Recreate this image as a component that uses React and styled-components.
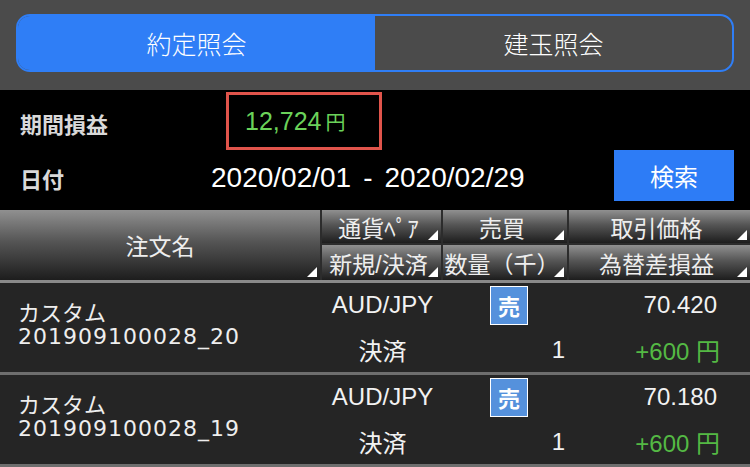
import styled, { createGlobalStyle } from "styled-components";

const GlobalStyle = createGlobalStyle`
  body {
    margin: 0;
    background: #000;
    font-family: "Liberation Sans", "Noto Sans CJK JP", sans-serif;
    color: #fff;
  }
`;

const rows = [
  { name: "201909100028_20", price: "70.420", qty: "1", pl: "+600" },
  { name: "201909100028_19", price: "70.180", qty: "1", pl: "+600" },
];

function App() {
  return (
    <Screen>
      <GlobalStyle />
      <TopBar>
        <Segmented>
          <Tab $active>約定照会</Tab>
          <Tab>建玉照会</Tab>
        </Segmented>
      </TopBar>

      <Summary>
        <SummaryRow>
          <Label $shift="6px">期間損益</Label>
          <ProfitBox>
            12,724<Yen>円</Yen>
          </ProfitBox>
        </SummaryRow>
        <SummaryRow $bottom="4px">
          <Label>日付</Label>
          <DateRange>
            2020/02/01<Dash>-</Dash>2020/02/29
          </DateRange>
          <SearchButton>検索</SearchButton>
        </SummaryRow>
      </Summary>

      <HeadGrid>
        <HeadCell $span>注文名</HeadCell>
        <HeadCell>通貨ﾍﾟｱ</HeadCell>
        <HeadCell>売買</HeadCell>
        <HeadCell>取引価格</HeadCell>
        <HeadCell>新規/決済</HeadCell>
        <HeadCell>数量（千）</HeadCell>
        <HeadCell>為替差損益</HeadCell>
      </HeadGrid>

      {rows.map((r) => (
        <Row key={r.name}>
          <NameCell>
            <span>カスタム</span>
            <OrderId>{r.name}</OrderId>
          </NameCell>
          <Cell $align="center">AUD/JPY</Cell>
          <Cell $align="center">
            <SideBadge>売</SideBadge>
          </Cell>
          <Cell $align="flex-end" $pad="33px">
            {r.price}
          </Cell>
          <Cell $align="center">決済</Cell>
          <Cell $align="flex-end" $pad="4px">
            {r.qty}
          </Cell>
          <Cell $align="flex-end" $pad="30px">
            <Gain>
              {r.pl} <small>円</small>
            </Gain>
          </Cell>
        </Row>
      ))}
    </Screen>
  );
}

export default App;

const Screen = styled.div`
  width: 750px;
  height: 467px;
  overflow: hidden;
  background: #000;
`;

const TopBar = styled.div`
  background: #4b4b4b;
  height: 90px;
  box-sizing: border-box;
  padding: 14px 16px 0;
`;

const Segmented = styled.div`
  display: flex;
  height: 58px;
  box-sizing: border-box;
  border: 2px solid #2f7ef6;
  border-radius: 14px;
  overflow: hidden;
`;

const Tab = styled.div`
  flex: 1;
  display: flex;
  align-items: center;
  justify-content: center;
  font-size: 25px;
  font-weight: 300;
  color: #fff;
  background: ${(p) => (p.$active ? "#2f7ef6" : "transparent")};
`;

const Summary = styled.div`
  height: 120px;
  display: flex;
  flex-direction: column;
`;

const SummaryRow = styled.div`
  flex: 1;
  display: flex;
  align-items: center;
  padding-bottom: ${(p) => p.$bottom || "0"};
`;

const Label = styled.div`
  width: 206px;
  padding-left: 20px;
  margin-top: ${(p) => p.$shift || "0"};
  font-size: 22px;
  font-weight: bold;
  color: #d9d9d9;
`;

const ProfitBox = styled.div`
  width: 156px;
  height: 58px;
  margin-top: 2px;
  box-sizing: border-box;
  border: 3px solid #e0544b;
  display: flex;
  align-items: center;
  padding-left: 16px;
  font-size: 25px;
  color: #6bd25a;
`;

const Yen = styled.span`
  font-size: 20px;
  margin-left: 4px;
`;

const DateRange = styled.div`
  width: 403px;
  margin-left: -15px;
  font-size: 28px;
  color: #fff;
  white-space: nowrap;
`;

const Dash = styled.span`
  margin: 0 12px;
`;

const SearchButton = styled.div`
  width: 120px;
  height: 51px;
  margin-top: -5px;
  background: #2d7cf6;
  display: flex;
  align-items: center;
  justify-content: center;
  font-size: 24px;
  color: #fff;
`;

const HeadGrid = styled.div`
  display: grid;
  grid-template-columns: 320px 119px 124px 1fr;
  grid-template-rows: 33px 35px;
  gap: 2px;
  background: #2c2c2c;
  border-bottom: 3px solid #8a8a8a;
`;

const HeadCell = styled.div`
  position: relative;
  grid-row: ${(p) => (p.$span ? "span 2" : "auto")};
  display: flex;
  align-items: center;
  justify-content: center;
  padding-right: ${(p) => (p.$span ? "0" : "6px")};
  font-size: 23px;
  color: #eee;
  white-space: nowrap;
  background: linear-gradient(#909090, #555 45%, #1d1d1d);

  &::after {
    content: "";
    position: absolute;
    right: 3px;
    bottom: 3px;
    border-left: 10px solid transparent;
    border-bottom: 10px solid #fff;
  }
`;

const Row = styled.div`
  display: grid;
  grid-template-columns: 322px 121px 126px 1fr;
  grid-template-rows: 44px 45px;
  background: #252525;
  border-bottom: 3px solid #6e6e6e;
`;

const NameCell = styled.div`
  grid-row: span 2;
  display: flex;
  flex-direction: column;
  justify-content: center;
  padding: 0 0 6px 18px;
  font-size: 22px;
  line-height: 23px;
  color: #eee;
`;

const OrderId = styled.span`
  font-family: "DejaVu Sans", "Noto Sans CJK JP", sans-serif;
  letter-spacing: 1px;
`;

const Cell = styled.div`
  display: flex;
  align-items: center;
  justify-content: ${(p) => p.$align};
  padding-right: ${(p) => p.$pad || "0"};
  font-size: 24px;
  color: #f2f2f2;
`;

const SideBadge = styled.div`
  width: 38px;
  height: 39px;
  margin-left: 6px;
  box-sizing: border-box;
  border: 1px solid #fff;
  background: #5591dc;
  display: flex;
  align-items: center;
  justify-content: center;
  font-size: 22px;
  font-weight: bold;
  color: #fff;
`;

const Gain = styled.span`
  color: #54b944;

  small {
    font-size: 24px;
  }
`;
